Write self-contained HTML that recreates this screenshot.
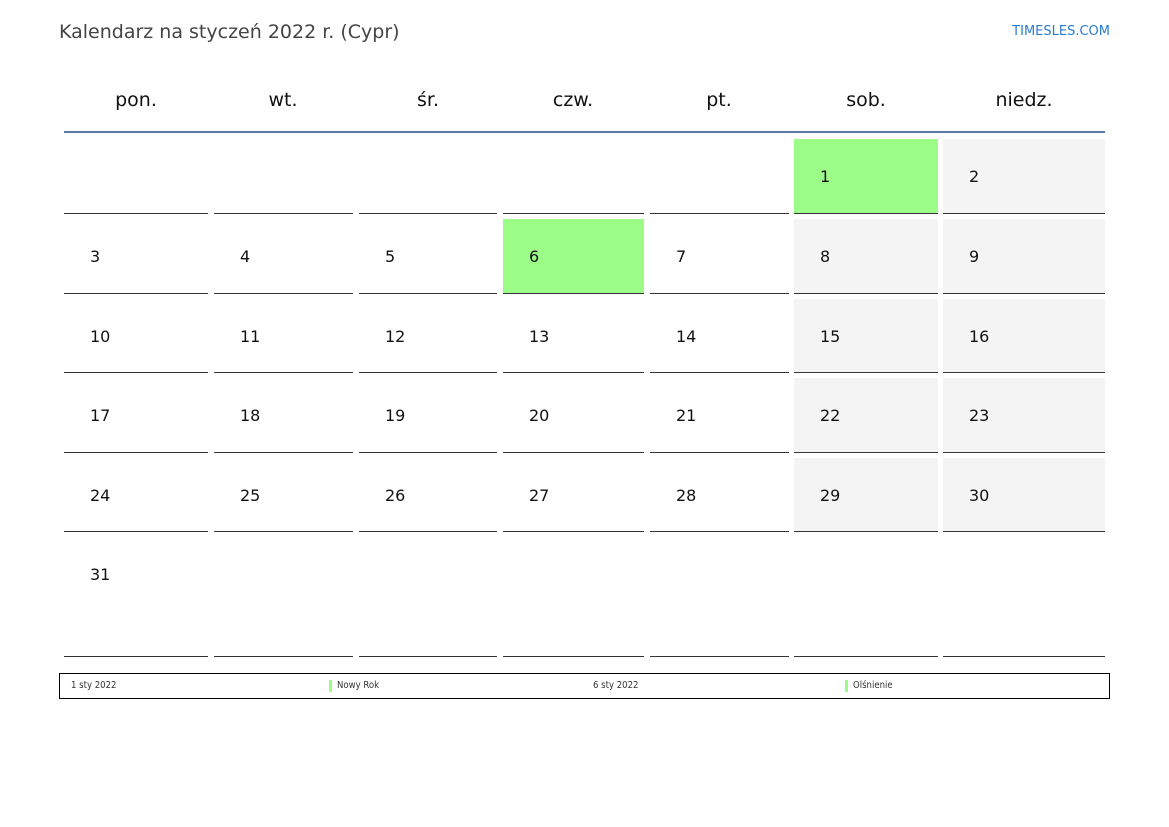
<!DOCTYPE html>
<html><head><meta charset="utf-8"><style>
body{margin:0;width:1169px;height:827px;background:#fff;position:relative;font-family:"DejaVu Sans","Liberation Sans",sans-serif;overflow:hidden}
.a{position:absolute}
.t{left:59px;top:21px;font-size:19px;color:#444}
.w{right:59px;top:24px;font-size:13px;color:#2a7bd0}
.h{top:89px;font-size:19px;color:#111;transform:translateX(-50%)}
.c{position:absolute;border-bottom:1px solid #333;box-sizing:border-box}
.c span{position:absolute;left:26px;top:28px;font-size:16px;color:#111}
.g{background:#f4f4f4}.gr{background:#9cfc88}
.l{position:absolute;top:673px;left:59px;width:1051px;height:26px;border:1px solid #000;box-sizing:border-box;font-size:9.5px;color:#333;font-family:"DejaVu Sans Condensed","DejaVu Sans",sans-serif}
.l div{position:absolute;top:6px}
.b{position:absolute;width:3px;height:12px;background:#9cfc88;top:6px}
</style></head><body>
<div class="a t">Kalendarz na styczeń 2022 r. (Cypr)</div>
<div class="a w">TIMESLES.COM</div>
<div class="a h" style="left:136px">pon.</div>
<div class="a h" style="left:283px">wt.</div>
<div class="a h" style="left:428px">śr.</div>
<div class="a h" style="left:573px">czw.</div>
<div class="a h" style="left:719px">pt.</div>
<div class="a h" style="left:866px">sob.</div>
<div class="a h" style="left:1024px">niedz.</div>
<div class="a" style="left:64px;top:131px;width:1041px;height:2px;background:#5a7aa5"></div>

<div class="c" style="left:64px;top:139px;width:144px;height:75px"></div>
<div class="c" style="left:214px;top:139px;width:139px;height:75px"></div>
<div class="c" style="left:359px;top:139px;width:138px;height:75px"></div>
<div class="c" style="left:503px;top:139px;width:141px;height:75px"></div>
<div class="c" style="left:650px;top:139px;width:139px;height:75px"></div>
<div class="c gr" style="left:794px;top:139px;width:144px;height:75px"><span>1</span></div>
<div class="c g" style="left:943px;top:139px;width:162px;height:75px"><span>2</span></div>
<div class="c" style="left:64px;top:219px;width:144px;height:75px"><span>3</span></div>
<div class="c" style="left:214px;top:219px;width:139px;height:75px"><span>4</span></div>
<div class="c" style="left:359px;top:219px;width:138px;height:75px"><span>5</span></div>
<div class="c gr" style="left:503px;top:219px;width:141px;height:75px"><span>6</span></div>
<div class="c" style="left:650px;top:219px;width:139px;height:75px"><span>7</span></div>
<div class="c g" style="left:794px;top:219px;width:144px;height:75px"><span>8</span></div>
<div class="c g" style="left:943px;top:219px;width:162px;height:75px"><span>9</span></div>
<div class="c" style="left:64px;top:299px;width:144px;height:74px"><span>10</span></div>
<div class="c" style="left:214px;top:299px;width:139px;height:74px"><span>11</span></div>
<div class="c" style="left:359px;top:299px;width:138px;height:74px"><span>12</span></div>
<div class="c" style="left:503px;top:299px;width:141px;height:74px"><span>13</span></div>
<div class="c" style="left:650px;top:299px;width:139px;height:74px"><span>14</span></div>
<div class="c g" style="left:794px;top:299px;width:144px;height:74px"><span>15</span></div>
<div class="c g" style="left:943px;top:299px;width:162px;height:74px"><span>16</span></div>
<div class="c" style="left:64px;top:378px;width:144px;height:75px"><span>17</span></div>
<div class="c" style="left:214px;top:378px;width:139px;height:75px"><span>18</span></div>
<div class="c" style="left:359px;top:378px;width:138px;height:75px"><span>19</span></div>
<div class="c" style="left:503px;top:378px;width:141px;height:75px"><span>20</span></div>
<div class="c" style="left:650px;top:378px;width:139px;height:75px"><span>21</span></div>
<div class="c g" style="left:794px;top:378px;width:144px;height:75px"><span>22</span></div>
<div class="c g" style="left:943px;top:378px;width:162px;height:75px"><span>23</span></div>
<div class="c" style="left:64px;top:458px;width:144px;height:74px"><span>24</span></div>
<div class="c" style="left:214px;top:458px;width:139px;height:74px"><span>25</span></div>
<div class="c" style="left:359px;top:458px;width:138px;height:74px"><span>26</span></div>
<div class="c" style="left:503px;top:458px;width:141px;height:74px"><span>27</span></div>
<div class="c" style="left:650px;top:458px;width:139px;height:74px"><span>28</span></div>
<div class="c g" style="left:794px;top:458px;width:144px;height:74px"><span>29</span></div>
<div class="c g" style="left:943px;top:458px;width:162px;height:74px"><span>30</span></div>
<div class="c" style="left:64px;top:537px;width:144px;height:120px"><span>31</span></div>
<div class="c" style="left:214px;top:537px;width:139px;height:120px"></div>
<div class="c" style="left:359px;top:537px;width:138px;height:120px"></div>
<div class="c" style="left:503px;top:537px;width:141px;height:120px"></div>
<div class="c" style="left:650px;top:537px;width:139px;height:120px"></div>
<div class="c" style="left:794px;top:537px;width:144px;height:120px"></div>
<div class="c" style="left:943px;top:537px;width:162px;height:120px"></div>

<div class="l">
<div style="left:11px">1 sty 2022</div>
<span class="b" style="left:269px"></span><div style="left:277px">Nowy Rok</div>
<div style="left:533px">6 sty 2022</div>
<span class="b" style="left:785px"></span><div style="left:793px">Olśnienie</div>
</div>
</body></html>
